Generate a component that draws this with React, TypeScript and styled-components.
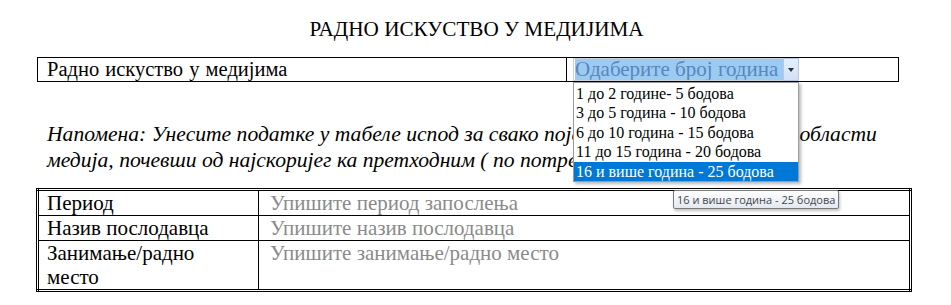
import React from 'react';
import styled, { createGlobalStyle } from 'styled-components';

const GlobalStyle = createGlobalStyle`
  html, body {
    margin: 0;
    padding: 0;
    background: #ffffff;
  }
  body {
    font-family: "Liberation Serif", serif;
    color: #000;
  }
`;

const Page = styled.div`
  position: relative;
  width: 951px;
  height: 305px;
  box-sizing: border-box;
  padding: 17px 39px 0 36px;
  overflow: hidden;
  font-family: "Liberation Serif", serif;
`;

const Title = styled.h1`
  margin: 0;
  font-family: "Liberation Serif", serif;
  font-size: 21.2px;
  line-height: 24px;
  font-weight: normal;
  text-align: center;
  padding-left: 5px;
`;

// --- header row with the select ---
const HeaderRow = styled.div`
  margin: 16px 0 0 1px;
  width: 862px;
  height: 25px;
  box-sizing: border-box;
  border: 1px solid #000;
  display: grid;
  grid-template-columns: 528px 1fr;
`;

const HeaderLabel = styled.div`
  padding-left: 9px;
  font-family: "Liberation Serif", serif;
  font-size: 20.5px;
  line-height: 23px;
  word-spacing: 1px;
`;

const HeaderValue = styled.div`
  position: relative;
  border-left: 1px solid #000;
  padding-left: 6px;
  display: flex;
  align-items: stretch;
`;

const Combo = styled.div`
  position: relative;
  display: flex;
  align-items: stretch;
  height: 23px;
`;

const ComboField = styled.div`
  width: 210px;
  box-sizing: border-box;
  border: 1px solid #c9d3de;
  border-right: none;
  background: #9ccbf2;
  background-clip: content-box;
  padding: 0 0 0 1px;
  color: #5886bd;
  font-family: "Liberation Serif", serif;
  font-size: 21px;
  line-height: 21px;
  white-space: nowrap;
  overflow: hidden;
`;

const ComboArrow = styled.div`
  width: 16px;
  box-sizing: border-box;
  border: 1px solid #b5c9e3;
  background: linear-gradient(#e6eefb, #d3e1f5);
  display: flex;
  align-items: center;
  justify-content: center;
`;

const Triangle = styled.span`
  width: 0;
  height: 0;
  border-left: 3.5px solid transparent;
  border-right: 3.5px solid transparent;
  border-top: 4px solid #1f3552;
`;

const OptionList = styled.ul`
  position: absolute;
  top: 24px;
  left: 0;
  width: 226px;
  margin: 0;
  padding: 1px 0 0;
  list-style: none;
  box-sizing: border-box;
  background: #fff;
  border: 1px solid #9c9c9c;
  box-shadow: 2px 2px 3px rgba(0, 0, 0, 0.28);
  z-index: 5;
`;

const OptionItem = styled.li<{ $selected?: boolean }>`
  padding-left: 2px;
  font-family: "Liberation Serif", serif;
  font-size: 16px;
  line-height: 19.4px;
  white-space: nowrap;
  background: ${(p) => (p.$selected ? '#0078d7' : 'transparent')};
  color: ${(p) => (p.$selected ? '#fff' : '#000')};
`;

// --- note ---
const Note = styled.p`
  margin: 39px 0 0;
  padding-left: 11px;
  font-family: "Liberation Serif", serif;
  font-style: italic;
  font-size: 21.6px;
  line-height: 26px;
  white-space: nowrap;
`;

// --- detail table ---
const DetailTable = styled.table`
  margin-top: 15px;
  width: 876px;
  border-collapse: collapse;
  border: 3px double #000;
  font-family: "Liberation Serif", serif;
  font-size: 21px;
`;

const LabelCell = styled.td`
  width: 203px;
  border: 1px solid #000;
  padding: 0 8px;
  line-height: 24px;
  vertical-align: top;
  white-space: pre-line;
`;

const HintCell = styled.td`
  border: 1px solid #000;
  padding: 0 8px 0 11px;
  line-height: 24px;
  vertical-align: top;
  color: #8a8a8a;
`;

const Tooltip = styled.div`
  position: absolute;
  left: 673px;
  top: 190px;
  height: 19px;
  box-sizing: border-box;
  padding: 0 3px;
  border: 1px solid #7a7a7a;
  border-radius: 2px;
  background: linear-gradient(#ffffff, #e3e8f2);
  box-shadow: 1px 2px 3px rgba(0, 0, 0, 0.25);
  font-family: "Open Sans", "DejaVu Sans", sans-serif;
  font-size: 11px;
  line-height: 17px;
  color: #474747;
  white-space: nowrap;
  z-index: 6;
`;

const options = [
  '1 до 2 године- 5 бодова',
  '3 до 5 година - 10 бодова',
  '6 до 10 година - 15 бодова',
  '11 до 15 година - 20 бодова',
  '16 и више година - 25 бодова',
];

const rows = [
  { label: 'Период', hint: 'Упишите период запослења' },
  { label: 'Назив послодавца', hint: 'Упишите назив послодавца' },
  { label: 'Занимање/радно\nместо', hint: 'Упишите занимање/радно место' },
];

export default function App() {
  return (
    <>
      <GlobalStyle />
      <Page>
        <Title>РАДНО ИСКУСТВО У МЕДИЈИМА</Title>

        <HeaderRow>
          <HeaderLabel>Радно искуство у медијима</HeaderLabel>
          <HeaderValue>
            <Combo>
              <ComboField>Одаберите број година</ComboField>
              <ComboArrow>
                <Triangle />
              </ComboArrow>
              <OptionList>
                {options.map((o, i) => (
                  <OptionItem key={o} $selected={i === options.length - 1}>
                    {o}
                  </OptionItem>
                ))}
              </OptionList>
            </Combo>
          </HeaderValue>
        </HeaderRow>

        <Note>
          Напомена: Унесите податке у табеле испод за свако појединачно радно место у области
          <br />
          медија, почевши од најскоријег ка претходним ( по потреби )
        </Note>

        <DetailTable>
          <tbody>
            {rows.map((r) => (
              <tr key={r.label}>
                <LabelCell>{r.label}</LabelCell>
                <HintCell>{r.hint}</HintCell>
              </tr>
            ))}
          </tbody>
        </DetailTable>

        <Tooltip>16 и више година - 25 бодова</Tooltip>
      </Page>
    </>
  );
}
